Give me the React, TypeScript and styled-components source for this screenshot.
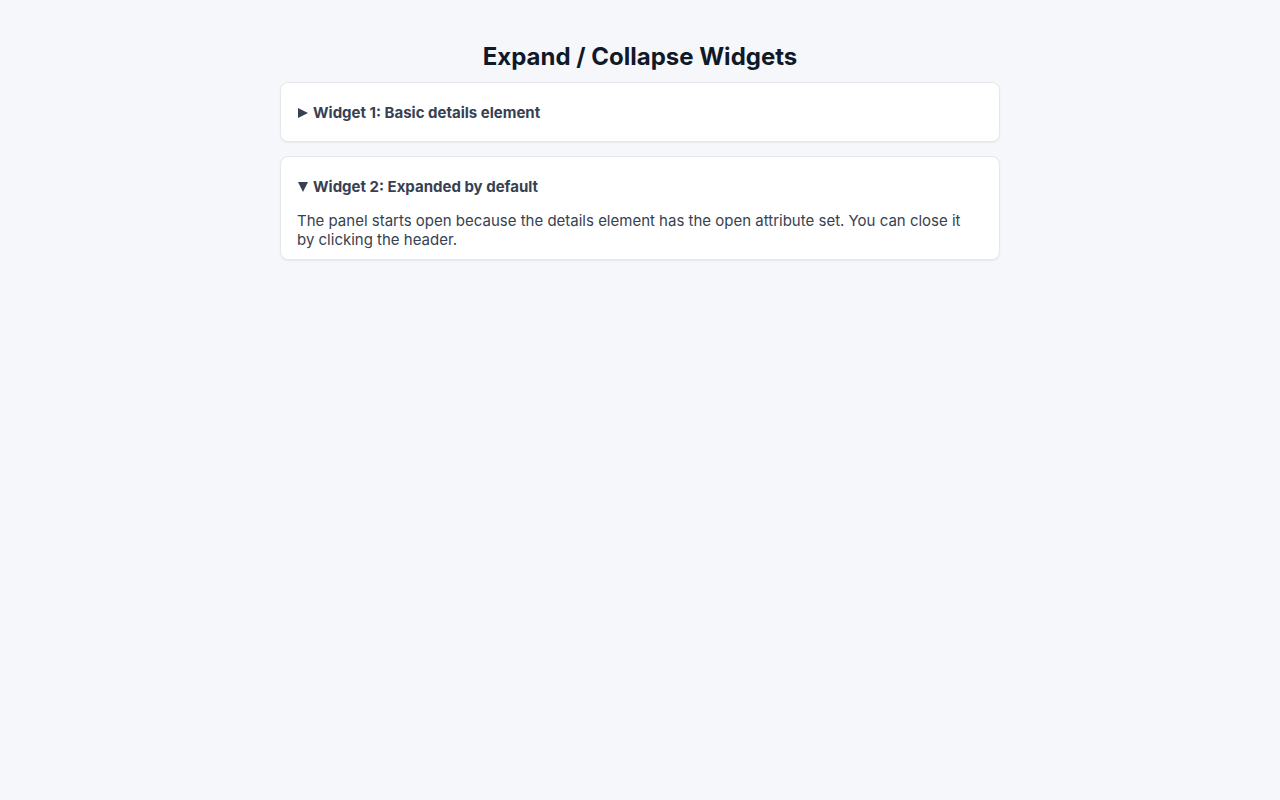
import React from 'react'
import styled, { createGlobalStyle } from 'styled-components'

const GlobalStyle = createGlobalStyle`
  html, body {
    margin: 0;
    padding: 0;
    background: #f5f7fb;
    font-family: Inter, "Noto Sans", sans-serif;
    color: #374151;
  }
`

const Page = styled.main`
  width: 720px;
  margin: 0 auto;
  padding-top: 41px;
`

const Title = styled.h1`
  margin: 0 0 9px;
  font-size: 24px;
  line-height: 32px;
  font-weight: 700;
  text-align: center;
  color: #111827;
`

const Header = styled.summary`
  display: flex;
  align-items: center;
  padding: 17px 0 15px;
  font-size: 15px;
  line-height: 26px;
  font-weight: 700;
  color: #374151;
  cursor: pointer;
  list-style: none;

  &::-webkit-details-marker {
    display: none;
  }

  &::before {
    content: '';
    width: 0;
    height: 0;
    margin: 0 5px 0 1px;
    border-left: 10px solid #374151;
    border-top: 5px solid transparent;
    border-bottom: 5px solid transparent;
  }
`

const Widget = styled.details`
  background: #ffffff;
  border: 1px solid #e5e7eb;
  border-radius: 8px;
  box-shadow: 0 1px 2px rgba(15, 23, 42, 0.06);
  padding: 0 16px;
  margin-bottom: 14px;

  &[open] > ${Header} {
    padding-bottom: 0;
  }

  &[open] > ${Header}::before {
    margin: 0 5px 0 1px;
    border-top: 10px solid #374151;
    border-left: 5px solid transparent;
    border-right: 5px solid transparent;
    border-bottom: 0;
  }
`

const Body = styled.p`
  margin: 0;
  padding: 11px 6px 10px 0;
  font-size: 15px;
  line-height: 19px;
  color: #374151;
`

const App: React.FC = () => (
  <>
    <GlobalStyle />
    <Page>
      <Title>Expand / Collapse Widgets</Title>
      <Widget>
        <Header>Widget 1: Basic details element</Header>
        <Body>This content is hidden until you click the header.</Body>
      </Widget>
      <Widget open>
        <Header>Widget 2: Expanded by default</Header>
        <Body>
          The panel starts open because the details element has the open attribute set. You can
          close it by clicking the header.
        </Body>
      </Widget>
    </Page>
  </>
)

export default App
